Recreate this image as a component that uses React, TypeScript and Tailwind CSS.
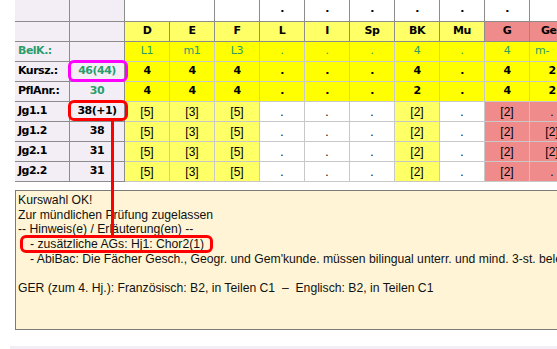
import React from "react";

type Tone = "lav" | "white" | "hi" | "yel" | "pink";
type Line = "dark" | "light";

const bgClass: Record<Tone, string> = {
  lav: "bg-[#f3eef5]",
  white: "bg-white",
  hi: "bg-[#ffff00]",
  yel: "bg-[#ffff66]",
  pink: "bg-[#f08b8b]",
};

const lineClass: Record<Line, string> = {
  dark: "border-[#8c8c8c]",
  light: "border-[#c8c8c8]",
};

const Cell = ({
  tone,
  line = "light",
  className = "",
  children,
}: {
  tone: Tone;
  line?: Line;
  className?: string;
  children?: React.ReactNode;
}) => (
  <div
    className={`border-r border-b flex items-center justify-center ${bgClass[tone]} ${lineClass[line]} ${className}`}
  >
    {children}
  </div>
);

const subjects = ["D", "E", "F", "L", "I", "Sp", "BK", "Mu", "G", "Ge"];
const headTone: Tone[] = ["yel", "yel", "yel", "yel", "yel", "yel", "yel", "yel", "pink", "pink"];
const belk = ["L1", "m1", "L3", ".", ".", ".", "4", ".", "4", "m-"];
const kursz = ["4", "4", "4", ".", ".", ".", "4", ".", "4", "2"];
const pflanr = ["4", "4", "4", ".", ".", ".", "2", ".", "4", "2"];
const rowTone: Tone[] = ["yel", "yel", "yel", "white", "white", "white", "yel", "white", "pink", "pink"];

const jgRows = [
  { name: "Jg1.1", sum: "38(+1)", ge: "." },
  { name: "Jg1.2", sum: "38", ge: "[2]" },
  { name: "Jg2.1", sum: "31", ge: "[2]" },
  { name: "Jg2.2", sum: "31", ge: "." },
];

const bold = "font-['DejaVu_Sans',sans-serif] font-bold text-[11px] tracking-[-0.5px]";
const plain = "font-['Liberation_Sans',Arial,sans-serif] text-[12px]";
const green = "text-[#2a9d6a]";

export default function App() {
  return (
    <div className="relative w-[557px] h-[349px] overflow-hidden bg-white text-black">
      <div className="ml-[15px] w-[600px] grid grid-cols-[55px_55px_repeat(10,45px)] grid-rows-[22px_repeat(8,20px)]">
        {/* row 0 */}
        <Cell tone="lav" line="dark" />
        <Cell tone="lav" line="dark" />
        <Cell tone="white" line="dark" className="col-span-2" />
        <Cell tone="white" line="dark" />
        {["L", "I", "Sp", "BK", "Mu", "G"].map((s) => (
          <Cell key={s} tone="white" line="dark" className={`${bold} items-end pb-[4px]`}>
            .
          </Cell>
        ))}
        <Cell tone="white" line="dark" />

        {/* row 1: subjects */}
        <Cell tone="lav" line="dark" />
        <Cell tone="lav" line="dark" />
        {subjects.map((s, i) => (
          <Cell
            key={s}
            tone={headTone[i]}
            line="dark"
            className={`${bold} ${i === 9 ? "justify-start pl-[11px]" : ""}`}
          >
            {s}
          </Cell>
        ))}

        {/* BelK */}
        <Cell tone="lav" line="dark" className={`${bold} ${green} justify-start pl-[3px]`}>
          BelK.:
        </Cell>
        <Cell tone="lav" line="dark" />
        {belk.map((v, i) => (
          <Cell
            key={i}
            tone="hi"
            className={`font-['DejaVu_Sans',sans-serif] text-[11px] tracking-[-0.3px] ${green} ${i === 9 ? "justify-start pl-[5px]" : ""}`}
          >
            {v}
          </Cell>
        ))}

        {/* Kursz */}
        <Cell tone="lav" line="dark" className={`${bold} justify-start pl-[3px]`}>
          Kursz.:
        </Cell>
        <Cell tone="lav" line="dark" className={`${bold} ${green}`}>
          46(44)
        </Cell>
        {kursz.map((v, i) => (
          <Cell key={i} tone="hi" className={bold}>
            {v}
          </Cell>
        ))}

        {/* PflAnr */}
        <Cell tone="lav" line="dark" className={`${bold} justify-start pl-[3px]`}>
          PflAnr.:
        </Cell>
        <Cell tone="lav" line="dark" className={`${bold} ${green}`}>
          30
        </Cell>
        {pflanr.map((v, i) => (
          <Cell key={i} tone="hi" className={bold}>
            {v}
          </Cell>
        ))}

        {/* Jg rows */}
        {jgRows.map((r) => (
          <React.Fragment key={r.name}>
            <Cell tone="lav" line="dark" className={`${bold} justify-start pl-[3px]`}>
              {r.name}
            </Cell>
            <Cell tone="lav" line="dark" className={bold}>
              {r.sum}
            </Cell>
            {["[5]", "[3]", "[5]", ".", ".", ".", "[2]", ".", "[2]", r.ge].map((v, i) => (
              <Cell key={i} tone={rowTone[i]} className={plain}>
                {v}
              </Cell>
            ))}
          </React.Fragment>
        ))}
      </div>

      <div className="mt-[8px] ml-[15px] w-[600px] h-[140px] border-l border-t border-b border-[#7a7a7a] bg-[#fff5d6] pl-[2px] pt-[2px] font-['Liberation_Sans',Arial,sans-serif] text-[12.2px] leading-[14.7px] text-[#111] whitespace-nowrap">
        <p>Kurswahl OK!</p>
        <p>Zur mündlichen Prüfung zugelassen</p>
        <p>-- Hinweis(e) / Erläuterung(en) --</p>
        <p className="pl-[12px]">- zusätzliche AGs: Hj1: Chor2(1)</p>
        <p className="pl-[12px]">
          - AbiBac: Die Fächer Gesch., Geogr. und Gem'kunde. müssen bilingual unterr. und mind. 3-st. belegt werden.
        </p>
        <p>&nbsp;</p>
        <p>GER (zum 4. Hj.): Französisch: B2, in Teilen C1 &nbsp;–&nbsp; Englisch: B2, in Teilen C1</p>
      </div>

      <div className="mt-[16px] ml-[10px] h-[3px] bg-[#f3eef6]" />

      {/* annotations */}
      <div className="absolute left-[68px] top-[60px] w-[60px] h-[22px] rounded-[6px] border-[3px] border-[#ff00ff]" />
      <div className="absolute left-[68px] top-[100px] w-[60px] h-[21px] rounded-[6px] border-[3px] border-[#ff0000]" />
      <div className="absolute left-[111px] top-[120px] w-[3px] h-[116px] bg-[#ff0000]" />
      <div className="absolute left-[20px] top-[235px] w-[193px] h-[18px] rounded-[6px] border-[3px] border-[#ff0000]" />
    </div>
  );
}
